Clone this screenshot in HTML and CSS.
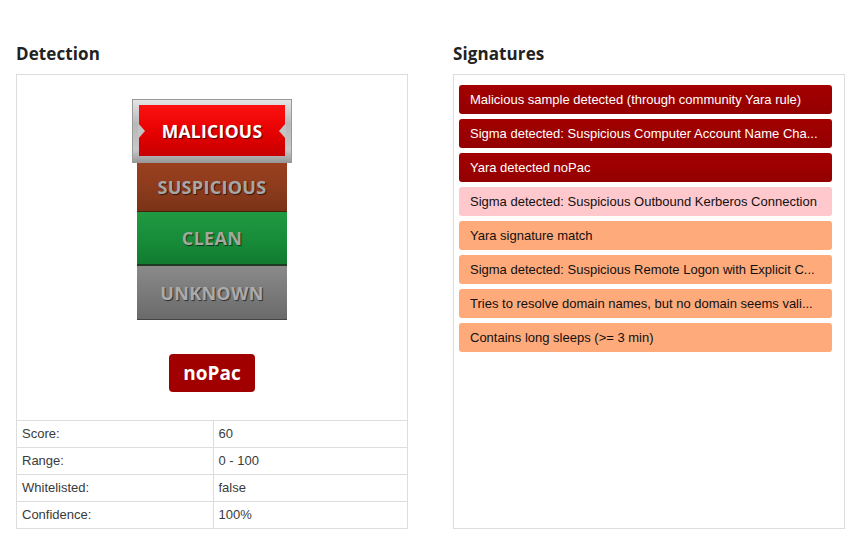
FILE: index.html
```html
<!DOCTYPE html>
<html>
<head>
<meta charset="utf-8">
<link rel="stylesheet" href="styles.css">
</head>
<body>
<div class="page">
  <section class="col">
    <h2 class="title">Detection</h2>
    <div class="panel">
      <div class="visual">
        <div class="meter">
          <div class="level active">
            <span class="notch left"></span>
            <div class="inner">MALICIOUS</div>
            <span class="notch right"></span>
          </div>
          <div class="level susp">SUSPICIOUS</div>
          <div class="level clean">CLEAN</div>
          <div class="level unknown">UNKNOWN</div>
        </div>
        <div class="badge">noPac</div>
      </div>
      <table class="stats">
        <tr><td>Score:</td><td>60</td></tr>
        <tr><td>Range:</td><td>0 - 100</td></tr>
        <tr><td>Whitelisted:</td><td>false</td></tr>
        <tr><td>Confidence:</td><td>100%</td></tr>
      </table>
    </div>
  </section>
  <section class="col">
    <h2 class="title">Signatures</h2>
    <div class="panel sigs">
      <div class="sig high">Malicious sample detected (through community Yara rule)</div>
      <div class="sig high">Sigma detected: Suspicious Computer Account Name Cha...</div>
      <div class="sig high">Yara detected noPac</div>
      <div class="sig pink">Sigma detected: Suspicious Outbound Kerberos Connection</div>
      <div class="sig med">Yara signature match</div>
      <div class="sig med">Sigma detected: Suspicious Remote Logon with Explicit C...</div>
      <div class="sig med">Tries to resolve domain names, but no domain seems vali...</div>
      <div class="sig med">Contains long sleeps (&gt;= 3 min)</div>
    </div>
  </section>
</div>
</body>
</html>
```
FILE: styles.css
```css
* { box-sizing: border-box; }
html, body { margin: 0; padding: 0; background: #fff; }
body { font-family: "Liberation Sans", Arial, sans-serif; color: #333; }

.page {
  display: flex;
  gap: 45px;
  padding: 42px 18px 0 16px;
}
.col { width: 392px; display: flex; flex-direction: column; }
.title {
  margin: 0 0 8px 0;
  font-family: "Open Sans", sans-serif;
  font-weight: 700;
  font-size: 17px;
  line-height: 24px;
  color: #222;
  letter-spacing: 0.1px;
}
.panel {
  border: 1px solid #ddd;
  height: 455px;
  display: flex;
  flex-direction: column;
}

.visual {
  height: 345px;
  display: flex;
  flex-direction: column;
  align-items: center;
  padding-top: 24px;
}
.meter {
  display: flex;
  flex-direction: column;
  align-items: center;
  width: 160px;
}
.level {
  width: 150px;
  display: flex;
  align-items: center;
  justify-content: center;
  font-family: "Open Sans", sans-serif;
  font-weight: 700;
  font-size: 18px;
  letter-spacing: 0.3px;
  text-shadow: 1px 1px 1px rgba(0,0,0,0.6);
}
.level.active {
  position: relative;
  width: 160px;
  height: 64px;
  padding: 5px 6px 6px 6px;
  background: linear-gradient(#e4e4e4, #b8b8b8 40%, #c8c8c8 80%, #9a9a9a);
  border: 1px solid #999;
}
.inner {
  width: 100%;
  height: 100%;
  display: flex;
  align-items: center;
  justify-content: center;
  background: linear-gradient(#ff1010, #e20000 60%, #c60000);
  color: #fff;
  font-size: 17.5px;
  text-shadow: 1px 1px 1px rgba(60,0,0,0.9);
}
.notch {
  position: absolute;
  top: 23px;
  width: 0;
  height: 0;
  border-top: 8px solid transparent;
  border-bottom: 8px solid transparent;
}
.notch.left { left: 5px; border-left: 7px solid #c4c4c4; }
.notch.right { right: 5px; border-right: 7px solid #c4c4c4; }

.susp {
  height: 49px;
  background: linear-gradient(#9a4020, #8a3a1c 60%, #7a3216);
  color: #a7a7a7;
  border-bottom: 1px solid #4a2010;
}
.clean {
  height: 54px;
  background: linear-gradient(#1f9a42, #178a38 60%, #117a30);
  color: #a2a89c;
  border-bottom: 2px solid #1e3a22;
}
.unknown {
  height: 54px;
  background: linear-gradient(#8a8a8a, #777 60%, #6a6a6a);
  color: #ababab;
  border-bottom: 1px solid #444;
}
.badge {
  margin-top: 34px;
  width: 86px;
  height: 38px;
  border-radius: 4px;
  background: #a10000;
  color: #fff;
  display: flex;
  align-items: center;
  justify-content: center;
  font-family: "Open Sans", sans-serif;
  font-weight: 700;
  font-size: 19px;
}

.stats {
  border-collapse: collapse;
  width: 100%;
  font-size: 13px;
  color: #3a3a3a;
}
.stats td {
  height: 27px;
  border-top: 1px solid #ddd;
  padding: 0 5px;
}
.stats td:first-child { width: 196px; border-right: 1px solid #ddd; }

.sigs {
  padding: 10px 12px 0 5px;
  gap: 5px;
}
.sig {
  height: 29px;
  line-height: 29px;
  padding: 0 10px 0 11px;
  border-radius: 3px;
  font-size: 13px;
  white-space: nowrap;
  overflow: hidden;
  color: #111;
}
.sig.high { background: linear-gradient(#a30000, #940000); color: #fff; }
.sig.pink { background: #ffc8cc; }
.sig.med { background: #ffaa7b; }
```
